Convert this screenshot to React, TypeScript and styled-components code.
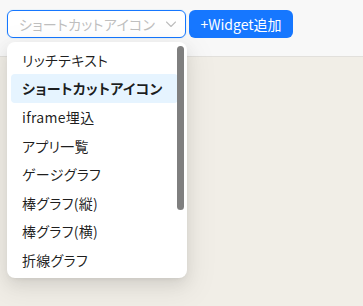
import React from 'react';
import styled, { createGlobalStyle } from 'styled-components';

const Global = createGlobalStyle`
    html, body {
        margin: 0;
        padding: 0;
        background-color: #f1eee7;
        font-family: "Noto Sans CJK JP", "Noto Sans", "Liberation Sans", sans-serif;
        font-size: 14px;
        font-feature-settings: "palt";
    }
`;

const S = {
    Page: styled.div`
        width: 363px;
        height: 306px;
        display: flex;
        flex-direction: column;
        overflow: hidden;
    `,
    Toolbar: styled.div`
        display: flex;
        align-items: center;
        gap: 3px;
        height: 57px;
        padding: 0 7px;
        box-sizing: border-box;
        background-color: #f8f8f8;
        border-bottom: 1px solid #e2e0dc;
    `,
    SelectWrap: styled.div`
        position: relative;
        margin-top: -9px;
    `,
    Select: styled.div`
        width: 179px;
        height: 28px;
        box-sizing: border-box;
        border: 1px solid #1677ff;
        border-radius: 6px;
        background-color: #ffffff;
        display: flex;
        align-items: center;
        justify-content: space-between;
        padding: 0 8px 0 11px;
        color: #bfbfbf;
        box-shadow: 0 0 0 1px rgba(5, 145, 255, 0.06);
    `,
    Placeholder: styled.span`
        font-size: 14px;
        white-space: nowrap;
        letter-spacing: 0.3px;
    `,
    Button: styled.button`
        margin-top: -9px;
        width: 104px;
        height: 28px;
        border: none;
        border-radius: 6px;
        background-color: #1677ff;
        color: #ffffff;
        font-family: inherit;
        font-size: 14px;
        font-feature-settings: "palt";
        padding: 0;
        cursor: pointer;
    `,
    Dropdown: styled.div`
        position: absolute;
        top: 32px;
        left: 0;
        width: 180px;
        box-sizing: border-box;
        padding: 4px;
        background-color: #ffffff;
        border-radius: 8px;
        box-shadow: 0 6px 16px 0 rgba(0, 0, 0, 0.08), 0 3px 6px -4px rgba(0, 0, 0, 0.12), 0 9px 28px 8px rgba(0, 0, 0, 0.05);
        z-index: 10;
    `,
    Option: styled.div<{ $active?: boolean }>`
        height: 28.6px;
        display: flex;
        align-items: center;
        padding: 0 11px;
        border-radius: 4px;
        color: rgba(0, 0, 0, 0.88);
        font-weight: ${(p) => (p.$active ? 600 : 400)};
        background-color: ${(p) => (p.$active ? '#e6f4ff' : 'transparent')};
        white-space: nowrap;
        letter-spacing: 0.3px;
        margin-right: 5px;
    `,
    Scrollbar: styled.div`
        position: absolute;
        top: 4px;
        right: 3px;
        width: 7px;
        height: 164px;
        border-radius: 4px;
        background-color: #7f7f7f;
    `,
};

const options = [
    'リッチテキスト',
    'ショートカットアイコン',
    'iframe埋込',
    'アプリ一覧',
    'ゲージグラフ',
    '棒グラフ(縦)',
    '棒グラフ(横)',
    '折線グラフ',
];

const Chevron = () => (
    <svg width="12" height="12" viewBox="0 0 12 12" fill="none">
        <path d="M1.5 4 L6 8.5 L10.5 4" stroke="#bfbfbf" strokeWidth="1.1" strokeLinecap="round" strokeLinejoin="round" />
    </svg>
);

const App = () => (
    <>
        <Global />
        <S.Page>
            <S.Toolbar>
                <S.SelectWrap>
                    <S.Select>
                        <S.Placeholder>ショートカットアイコン</S.Placeholder>
                        <Chevron />
                    </S.Select>
                    <S.Dropdown>
                        {options.map((o) => (
                            <S.Option key={o} $active={o === 'ショートカットアイコン'}>
                                {o}
                            </S.Option>
                        ))}
                        <S.Scrollbar />
                    </S.Dropdown>
                </S.SelectWrap>
                <S.Button>+Widget追加</S.Button>
            </S.Toolbar>
        </S.Page>
    </>
);

export default App;
